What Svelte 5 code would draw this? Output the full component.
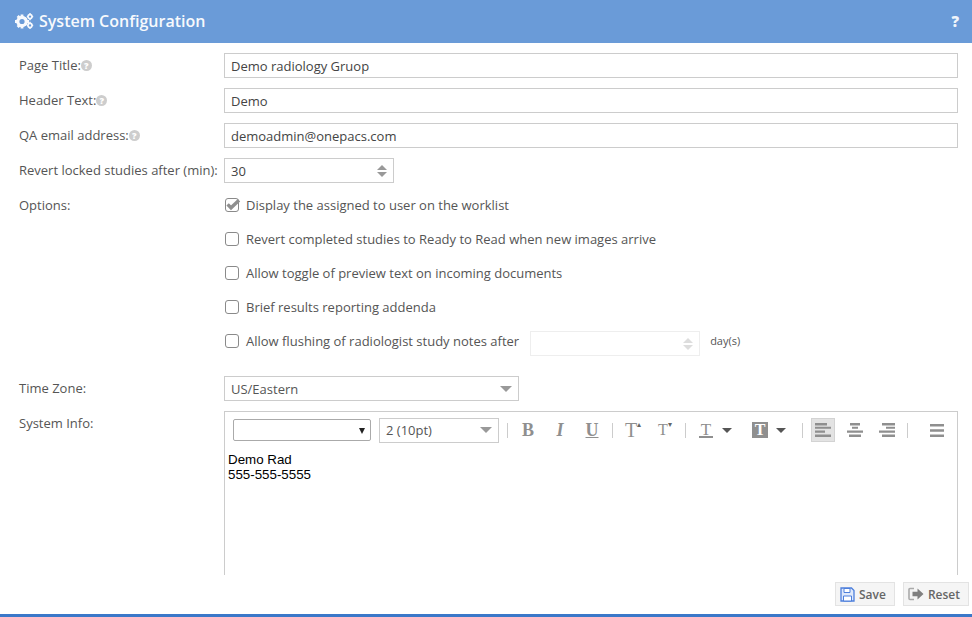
<script>
  let pageTitle = $state('Demo radiology Gruop');
  let headerText = $state('Demo');
  let qaEmail = $state('demoadmin@onepacs.com');
  let revertAfter = $state('30');
  let flushDays = $state('');
  let timeZone = $state('US/Eastern');
  let fontSize = $state('2 (10pt)');

  let options = $state([
    { label: 'Display the assigned to user on the worklist', checked: true },
    { label: 'Revert completed studies to Ready to Read when new images arrive', checked: false },
    { label: 'Allow toggle of preview text on incoming documents', checked: false },
    { label: 'Brief results reporting addenda', checked: false }
  ]);
  let flushNotes = $state(false);
</script>

{#snippet help()}
  <span class="help">?</span>
{/snippet}

{#snippet box(checked)}
  <svg class="box" width="17" height="16" viewBox="0 0 17 16">
    <rect x="1.5" y="1.5" width="13" height="13" rx="2.5" fill="#fff" stroke="#8a8a8a" />
    {#if checked}
      <path d="M3.6 7.4 L7 10.8 L15 3.2" fill="none" stroke="#8f8f8f" stroke-width="3.4" />
    {/if}
  </svg>
{/snippet}

<div class="page">
  <header>
    <h1>
      <svg width="19" height="16" viewBox="0 0 19 16" fill="#fff">
        <circle cx="7" cy="8.5" r="4.2" fill="none" stroke="#fff" stroke-width="3.2" />
        <path d="M5.6 1.5h2.8v2.5H5.6zM5.6 13h2.8v2.5H5.6zM0 7.1h2.5v2.8H0zM11.5 7.1H14v2.8h-2.5zM1.6 3.9l2-2 1.7 1.7-2 2zM8.7 11.3l2-2 1.7 1.7-2 2zM1.6 13.1l2 2 1.7-1.7-2-2zM8.7 5.6l2 2 1.7-1.7-2-2z" />
        <circle cx="15" cy="3.6" r="2" fill="none" stroke="#fff" stroke-width="1.6" />
        <circle cx="15" cy="12.4" r="2" fill="none" stroke="#fff" stroke-width="1.6" />
        <path d="M14.3 0h1.4v1.2h-1.4zM14.3 6h1.4v1.2h-1.4zM11.8 3h1.2v1.3h-1.2zM17 3h1.2v1.3H17zM14.3 8.8h1.4V10h-1.4zM14.3 14.8h1.4V16h-1.4zM11.8 11.8h1.2v1.3h-1.2zM17 11.8h1.2v1.3H17z" />
      </svg>
      System Configuration
    </h1>
    <button class="header-help">?</button>
  </header>

  <main>
    <div class="row">
      <label for="title">Page Title:{@render help()}</label>
      <input id="title" type="text" bind:value={pageTitle} />
    </div>
    <div class="row">
      <label for="head">Header Text:{@render help()}</label>
      <input id="head" type="text" bind:value={headerText} />
    </div>
    <div class="row">
      <label for="mail">QA email address:{@render help()}</label>
      <input id="mail" type="text" bind:value={qaEmail} />
    </div>
    <div class="row">
      <label for="revert">Revert locked studies after (min):</label>
      <div class="spinner revert">
        <input id="revert" type="text" bind:value={revertAfter} />
        <span class="spin"></span>
      </div>
    </div>

    <div class="row options">
      <span class="label">Options:</span>
      <div class="option-list">
        {#each options as opt}
          <label class="option">
            <input class="hidden" type="checkbox" bind:checked={opt.checked} />
            {@render box(opt.checked)}
            {opt.label}
          </label>
        {/each}
        <div class="flush">
          <label class="option">
            <input class="hidden" type="checkbox" bind:checked={flushNotes} />
            {@render box(flushNotes)}
            Allow flushing of radiologist study notes after
          </label>
          <div class="spinner days">
            <input type="text" bind:value={flushDays} disabled={!flushNotes} />
            <span class="spin light"></span>
          </div>
          <span class="unit">day(s)</span>
        </div>
      </div>
    </div>

    <div class="row zone">
      <label for="tz">Time Zone:</label>
      <div class="select tz">
        <select id="tz" bind:value={timeZone}>
          <option>US/Eastern</option>
          <option>US/Central</option>
          <option>US/Mountain</option>
          <option>US/Pacific</option>
        </select>
      </div>
    </div>

    <div class="row">
      <span class="label">System Info:</span>
      <div class="editor">
        <div class="toolbar">
          <div class="font-pick"><span class="arrow"></span></div>
          <div class="select size">
            <select bind:value={fontSize}>
              <option>1 (8pt)</option>
              <option>2 (10pt)</option>
              <option>3 (12pt)</option>
            </select>
          </div>
          <i class="sep first"></i>
          <span class="tool b">B</span>
          <span class="tool it">I</span>
          <span class="tool u">U</span>
          <i class="sep"></i>
          <span class="tool big">T<small>▴</small></span>
          <span class="tool small-t">T<small>▾</small></span>
          <i class="sep"></i>
          <span class="tool color">
            <span class="color-t">T</span>
            <span class="tool-arrow"></span>
          </span>
          <span class="tool back">
            <span class="back-t">T</span>
            <span class="tool-arrow"></span>
          </span>
          <i class="sep"></i>
          <span class="tool"><span class="active">
            <svg width="16" height="14" viewBox="0 0 16 14" fill="#8f8f8f"><path d="M0 0h12v2.500H0zM0 3.800h16v2H0zM0 7.400h10v2.400H0zM0 11.400h16V14H0z" /></svg>
          </span></span>
          <span class="tool">
            <svg width="16" height="14" viewBox="0 0 16 14" fill="#8f8f8f"><path d="M3 0h10v2.500H3zM5 3.800h6v2H5zM0 7.400h16v2.400H0zM2 11.400h12V14H2z" /></svg>
          </span>
          <span class="tool">
            <svg width="16" height="14" viewBox="0 0 16 14" fill="#8f8f8f"><path d="M3 0h13v2.500H3zM7 3.800h9v2H7zM0 7.400h16v2.400H0zM3 11.400h13V14H3z" /></svg>
          </span>
          <i class="sep"></i>
          <span class="tool justify">
            <svg width="14" height="13" viewBox="0 0 14 13" fill="#8f8f8f"><path d="M0 0h14v2.600H0zM0 5.200h14v2.600H0zM0 10.400h14V13H0z" /></svg>
          </span>
        </div>
        <div class="content" contenteditable="true">
          <div>Demo Rad</div>
          <div>555-555-5555</div>
        </div>
      </div>
    </div>
  </main>

  <footer>
    <button class="btn">
      <svg width="15" height="15" viewBox="0 0 15 15">
        <path d="M1 1h10.500L14 3.500V14H1z" fill="#dfe9fb" stroke="#4d7fdc" stroke-width="1.300" />
        <path d="M4 1.500h6v4H4z" fill="#fff" stroke="#4d7fdc" />
        <path d="M3.500 9h8v5h-8z" fill="#fff" stroke="#4d7fdc" />
      </svg>
      Save
    </button>
    <button class="btn">
      <svg width="16" height="14" viewBox="0 0 16 14">
        <path d="M6 1.500H2A1 1 0 0 0 1 2.500v9a1 1 0 0 0 1 1h4" fill="none" stroke="#aaa" stroke-width="1.600" />
        <path d="M4.500 4.800h5V1.500L15.500 7l-6 5.500V9.200h-5z" fill="#808080" />
      </svg>
      Reset
    </button>
  </footer>
  <div class="bottom-bar"></div>
</div>

<style>
  *, *::before, *::after { box-sizing: border-box; margin: 0; padding: 0; }

  :global(body) {
    font-family: 'Open Sans', sans-serif;
    font-size: 13px;
    color: #555;
    background: #fff;
  }

  .page {
    height: 617px;
    display: flex;
    flex-direction: column;
    overflow: hidden;
  }

  header {
    height: 43px;
    flex: none;
    background: #6a9bd8;
    display: flex;
    align-items: center;
    justify-content: space-between;
    padding: 0 13px 0 15px;
  }

  h1 {
    font-size: 16px;
    font-weight: 600;
    color: #fff;
    display: flex;
    align-items: center;
    gap: 5px;
    padding-bottom: 1px;
    opacity: .95;
  }

  .header-help {
    background: none;
    border: none;
    color: #fff;
    font-family: 'Open Sans', sans-serif;
    font-size: 15px;
    font-weight: 800;
    line-height: 1;
    cursor: pointer;
    opacity: .9;
  }

  main {
    flex: 1;
    min-height: 0;
    overflow: hidden;
    padding: 10px 14px 0 19px;
    display: flex;
    flex-direction: column;
    gap: 10px;
  }

  .row {
    display: flex;
    align-items: flex-start;
    flex: none;
  }

  .row > label, .label {
    width: 205px;
    flex: none;
    line-height: 24px;
    color: #555;
  }

  .help {
    display: inline-block;
    width: 11px;
    height: 11px;
    border-radius: 50%;
    background: #cdcdcd;
    color: #fff;
    font-size: 9px;
    font-weight: 800;
    line-height: 11px;
    text-align: center;
    vertical-align: 1px;
  }

  input[type='text'] {
    flex: 1;
    width: 100%;
    height: 25px;
    padding: 0 6px;
    border: 1px solid #ccc;
    background: #fff;
    font-family: 'Open Sans', sans-serif;
    font-size: 13px;
    color: #444;
    outline: none;
  }

  input[type='text']:focus { border-color: #6a9bd8; }

  input:disabled { border-color: #eee; }

  .spinner {
    position: relative;
    display: flex;
  }

  .revert { width: 170px; }
  .days { width: 170px; margin: 2px 0 0 11px; }

  .spin {
    position: absolute;
    right: 7px;
    top: 7px;
    width: 10px;
    height: 12px;
    pointer-events: none;
  }

  .spin::before, .spin::after {
    content: '';
    position: absolute;
    left: 0;
    border-left: 5px solid transparent;
    border-right: 5px solid transparent;
  }

  .spin::before { top: 0; border-bottom: 5px solid #999; }
  .spin::after { bottom: 0; border-top: 5px solid #999; }
  .spin.light::before { border-bottom-color: #ddd; }
  .spin.light::after { border-top-color: #ddd; }

  .option-list {
    display: flex;
    flex-direction: column;
    gap: 10px;
    flex: 1;
  }

  .option {
    height: 24px;
    display: flex;
    align-items: center;
    color: #555;
    cursor: pointer;
  }

  .flush {
    height: 27px;
    display: flex;
    align-items: flex-start;
  }

  .box {
    margin-right: 5px;
    flex: none;
  }

  .hidden {
    position: absolute;
    opacity: 0;
    width: 0;
    height: 0;
  }

  .unit {
    margin-left: 10px;
    font-size: 11px;
    line-height: 24px;
    color: #555;
  }

  .zone { margin-top: 10px; }

  .select {
    position: relative;
  }

  .select select {
    width: 100%;
    height: 100%;
    appearance: none;
    border: 1px solid #ccc;
    background: #fff;
    padding: 0 6px;
    font-family: 'Open Sans', sans-serif;
    font-size: 13px;
    color: #555;
    outline: none;
  }

  .select::after {
    content: '';
    position: absolute;
    right: 7px;
    top: 50%;
    margin-top: -3px;
    border-left: 6px solid transparent;
    border-right: 6px solid transparent;
    border-top: 6px solid #999;
    pointer-events: none;
  }

  .tz { width: 295px; height: 25px; }

  .editor {
    flex: 1;
    height: 300px;
    border: 1px solid #ccc;
  }

  .toolbar {
    height: 38px;
    display: flex;
    align-items: center;
    padding: 0 0 2px 8px;
    color: #8f8f8f;
  }

  .font-pick {
    width: 138px;
    height: 22px;
    border: 1px solid #aaa;
    border-radius: 2px;
    position: relative;
  }

  .arrow {
    position: absolute;
    right: 5px;
    top: 8px;
    border-left: 3.500px solid transparent;
    border-right: 3.500px solid transparent;
    border-top: 6px solid #222;
  }

  .size {
    width: 120px;
    height: 25px;
    margin-left: 8px;
  }

  .sep {
    width: 1px;
    height: 15px;
    background: #ccc;
    margin: 0 4px;
  }

  .sep.first { margin-left: 8px; }

  .tool {
    width: 32px;
    height: 24px;
    flex: none;
    font-family: 'Liberation Serif', serif;
    font-size: 18px;
    line-height: 24px;
    display: flex;
    align-items: center;
    justify-content: center;
    font-weight: 700;
    color: #8f8f8f;
  }

  .tool small {
    font-size: 8px;
    align-self: flex-start;
    line-height: 14px;
    color: #666;
  }

  .it { font-style: italic; }
  .u { text-decoration: underline; }
  .big { font-size: 20px; font-weight: 400; }
  .small-t { font-size: 16px; font-weight: 400; }

  .color, .back { justify-content: flex-start; }
  .color { width: 52px; padding-left: 9px; gap: 9px; font-weight: 400; }
  .back { width: 56px; padding-left: 10px; gap: 8px; }

  .color-t {
    width: 14px;
    height: 16px;
    font-size: 17px;
    line-height: 15px;
    text-align: center;
    border-bottom: 2px solid #8f8f8f;
  }

  .back-t {
    width: 16px;
    height: 16px;
    background: #8f8f8f;
    color: #fff;
    font-size: 16px;
    line-height: 16px;
    text-align: center;
  }

  .tool-arrow {
    border-left: 5px solid transparent;
    border-right: 5px solid transparent;
    border-top: 5px solid #555;
  }

  .active {
    width: 24px;
    height: 24px;
    display: flex;
    align-items: center;
    justify-content: center;
    background: #e3e3e3;
    border: 1px solid #d3d3d3;
  }

  .justify { margin-left: 9px; }

  .content {
    padding: 2px 3px;
    font-family: 'Liberation Sans', sans-serif;
    font-size: 13.330px;
    line-height: 15px;
    color: #000;
    outline: none;
  }

  footer {
    height: 39px;
    flex: none;
    display: flex;
    justify-content: flex-end;
    align-items: flex-start;
    gap: 8px;
    padding: 7px 3px 0 0;
  }

  .btn {
    height: 24px;
    padding: 0 8px 0 4px;
    display: flex;
    align-items: center;
    gap: 4px;
    background: #f5f5f5;
    border: 1px solid #e3e3e3;
    font-family: 'Open Sans', sans-serif;
    font-size: 12px;
    font-weight: 600;
    color: #666;
    cursor: pointer;
  }

  .btn:hover { background: #eee; }

  .bottom-bar {
    height: 3px;
    flex: none;
    background: #3b78c9;
  }
</style>
